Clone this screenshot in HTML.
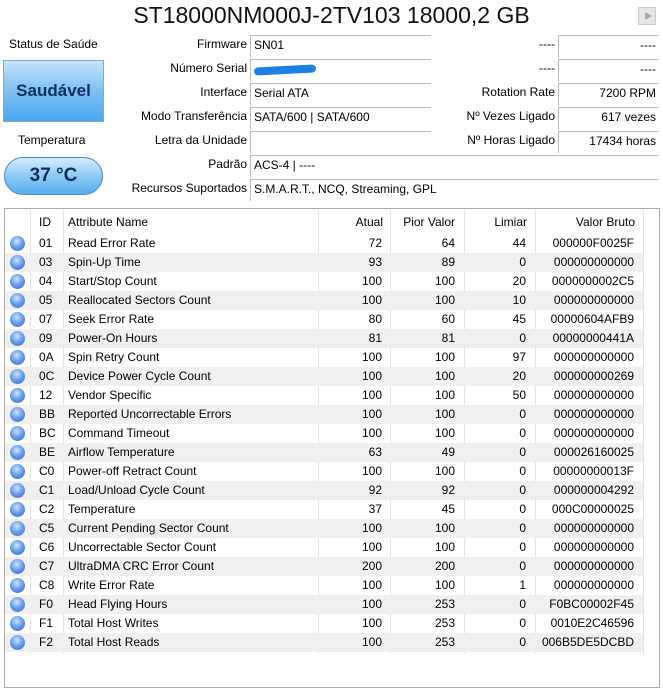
<!DOCTYPE html>
<html><head><meta charset="utf-8"><style>
*{margin:0;padding:0;box-sizing:border-box}
body{width:663px;height:675px;background:#fff;font-family:"Segoe UI","Liberation Sans",sans-serif;font-size:12px;color:#000;position:relative;overflow:hidden}
.a{position:absolute;white-space:nowrap}
.title{left:0;width:663px;text-align:center;top:2px;font-size:23px;color:#111}
.lbl{text-align:right;width:240px;left:7px}
.f{border-top:1px solid #bbb;border-left:1px solid #bbb;height:22px;padding:2px 3px;background:#fff}
.rl{text-align:right;width:200px}
.tbl{left:4px;top:208px;width:656px;height:480px;border:1px solid #aaa}
.row{position:absolute;left:5px;width:638px;height:19px}
.row.s{background:#f0f0f0}
.c{position:absolute;top:2px}
.r{text-align:right}
.dot{position:absolute;left:5px;top:2px;width:15px;height:15px;border-radius:50%;background:radial-gradient(circle at 45% 35%,#cfe4ff 0,#6aa0ee 45%,#2a5fc8 100%)}
.vl{position:absolute;top:1px;width:1px;height:444px;background:#e4e4e4}
</style></head><body>
<div class="a title">ST18000NM000J-2TV103 18000,2 GB</div>
<div class="a" style="left:638px;top:7px;width:18px;height:18px;background:#e6e6e6;border:1px solid #ccc"><div style="position:absolute;left:6px;top:4px;border-left:7px solid #aaa;border-top:4px solid transparent;border-bottom:4px solid transparent"></div></div>
<div class="a" style="left:9px;top:37px">Status de Saúde</div>
<div class="a" style="left:3px;top:60px;width:101px;height:62px;border:1px solid #8ab;background:linear-gradient(#c8e4fb,#7cc0f3 50%,#4aa6ee);text-align:center;font-weight:bold;font-size:17px;line-height:60px;color:#103060">Saudável</div>
<div class="a" style="left:18px;top:133px">Temperatura</div>
<div class="a" style="left:4px;top:157px;width:99px;height:38px;border:1px solid #4a8cc8;border-radius:20px;background:linear-gradient(#d4ecfd,#8ccbf6 50%,#55aef0);text-align:center;font-weight:bold;font-size:19px;line-height:36px;color:#103050">37 °C</div>

<div class="a lbl" style="top:37px">Firmware</div>
<div class="a lbl" style="top:61px">Número Serial</div>
<div class="a lbl" style="top:85px">Interface</div>
<div class="a lbl" style="top:109px">Modo Transferência</div>
<div class="a lbl" style="top:133px">Letra da Unidade</div>
<div class="a lbl" style="top:157px">Padrão</div>
<div class="a lbl" style="top:181px">Recursos Suportados</div>
<div class="a f" style="left:250px;top:35px;width:181px">SN01</div>
<div class="a f" style="left:250px;top:59px;width:181px"><span style="display:inline-block;width:62px;height:8px;background:#1e7fe6;border-radius:4px;margin-top:4px;transform:rotate(-3deg)"></span></div>
<div class="a f" style="left:250px;top:83px;width:181px">Serial ATA</div>
<div class="a f" style="left:250px;top:107px;width:181px">SATA/600 | SATA/600</div>
<div class="a f" style="left:250px;top:131px;width:181px"></div>
<div class="a f" style="left:250px;top:155px;width:409px">ACS-4 | ----</div>
<div class="a f" style="left:250px;top:179px;width:409px">S.M.A.R.T., NCQ, Streaming, GPL</div>

<div class="a rl" style="left:355px;top:37px">----</div>
<div class="a rl" style="left:355px;top:61px">----</div>
<div class="a rl" style="left:355px;top:85px">Rotation Rate</div>
<div class="a rl" style="left:355px;top:109px">Nº Vezes Ligado</div>
<div class="a rl" style="left:355px;top:133px">Nº Horas Ligado</div>
<div class="a f r" style="left:558px;top:35px;width:101px">----</div>
<div class="a f r" style="left:558px;top:59px;width:101px">----</div>
<div class="a f r" style="left:558px;top:83px;width:101px">7200 RPM</div>
<div class="a f r" style="left:558px;top:107px;width:101px">617 vezes</div>
<div class="a f r" style="left:558px;top:131px;width:101px">17434 horas</div>

<div class="a tbl">
<div class="vl" style="left:25px"></div><div class="vl" style="left:58px"></div><div class="vl" style="left:313px"></div><div class="vl" style="left:385px"></div><div class="vl" style="left:459px"></div><div class="vl" style="left:530px"></div><div class="vl" style="left:638px"></div>
<div class="row" style="top:4px;left:0">
<div class="c" style="left:34px">ID</div><div class="c" style="left:63px">Attribute Name</div>
<div class="c r" style="left:300px;width:78px">Atual</div><div class="c r" style="left:370px;width:80px">Pior Valor</div><div class="c r" style="left:440px;width:82px">Limiar</div><div class="c r" style="left:530px;width:100px">Valor Bruto</div></div>
<div id="rows"></div>
</div>
<script>
var d=[["01","Read Error Rate",72,64,44,"000000F0025F"],["03","Spin-Up Time",93,89,0,"000000000000"],["04","Start/Stop Count",100,100,20,"0000000002C5"],["05","Reallocated Sectors Count",100,100,10,"000000000000"],["07","Seek Error Rate",80,60,45,"00000604AFB9"],["09","Power-On Hours",81,81,0,"00000000441A"],["0A","Spin Retry Count",100,100,97,"000000000000"],["0C","Device Power Cycle Count",100,100,20,"000000000269"],["12","Vendor Specific",100,100,50,"000000000000"],["BB","Reported Uncorrectable Errors",100,100,0,"000000000000"],["BC","Command Timeout",100,100,0,"000000000000"],["BE","Airflow Temperature",63,49,0,"000026160025"],["C0","Power-off Retract Count",100,100,0,"00000000013F"],["C1","Load/Unload Cycle Count",92,92,0,"000000004292"],["C2","Temperature",37,45,0,"000C00000025"],["C5","Current Pending Sector Count",100,100,0,"000000000000"],["C6","Uncorrectable Sector Count",100,100,0,"000000000000"],["C7","UltraDMA CRC Error Count",200,200,0,"000000000000"],["C8","Write Error Rate",100,100,1,"000000000000"],["F0","Head Flying Hours",100,253,0,"F0BC00002F45"],["F1","Total Host Writes",100,253,0,"0010E2C46596"],["F2","Total Host Reads",100,253,0,"006B5DE5DCBD"]];
var h="";d.forEach(function(r,i){h+='<div class="row'+(i%2?' s':'')+'" style="top:'+(25+i*19)+'px;left:0;width:638px"><div class="dot"></div><div class="c" style="left:34px">'+r[0]+'</div><div class="c" style="left:63px">'+r[1]+'</div><div class="c r" style="left:300px;width:77px">'+r[2]+'</div><div class="c r" style="left:370px;width:80px">'+r[3]+'</div><div class="c r" style="left:440px;width:81px">'+r[4]+'</div><div class="c r" style="left:530px;width:99px">'+r[5]+'</div></div>'});
document.getElementById("rows").outerHTML=h;
</script>
</body></html>
